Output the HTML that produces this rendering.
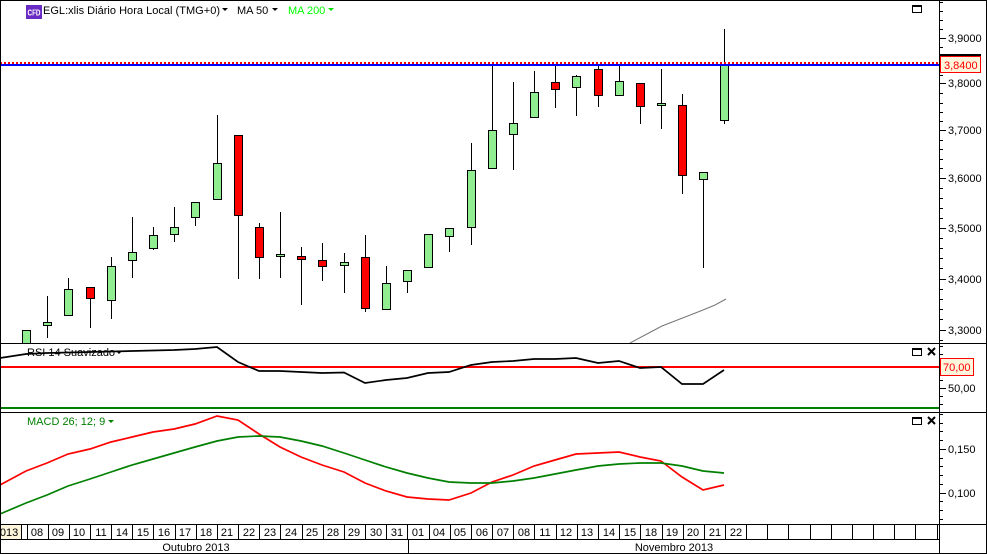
<!DOCTYPE html>
<html><head><meta charset="utf-8"><style>
html,body{margin:0;padding:0;background:#fff}
svg{display:block;font-family:"Liberation Sans",Arial,sans-serif}
.w path{stroke:#000;stroke-width:1;fill:none}
.g{fill:#90ee90;stroke:#000;stroke-width:1}
.r{fill:#ff0000;stroke:#000;stroke-width:1}
.ax{fill:#000;font-size:11px}
.d{fill:#000;font-size:11px;text-anchor:middle}
</style></head><body>
<svg width="987" height="554" viewBox="0 0 987 554" xmlns="http://www.w3.org/2000/svg">
<rect width="987" height="554" fill="#fff"/>
<!-- MA200 -->
<polyline points="630,343 645,335 662,326 680,319 703,310 715,305 726,299" fill="none" stroke="#777" stroke-width="1"/>
<!-- wicks -->
<g class="w" shape-rendering="crispEdges">
<path d="M47.5 296V338M68.5 278V290M90.5 298V328M111.5 257V319M132.5 217V278M153.5 227V250M174.5 207V242M195.5 217V226M217.5 115V164M238.5 215V279M259.5 223V279M280.5 212V278M301.5 247V305M322.5 243V281M344.5 253V293M365.5 235V312M386.5 266V284M407.5 281V293M449.5 236V252M471.5 143V245M492.5 64V131M513.5 82V170M534.5 71V93M555.5 64V108M576.5 75V116M598.5 64V107M619.5 64V82M640.5 106V124M661.5 69V129M682.5 94V194M703.5 179V268M724.5 29V124"/>
</g>
<!-- bodies -->
<g shape-rendering="crispEdges">
<rect class="g" x="22.5" y="330.5" width="8" height="13"/>
<rect class="g" x="43.5" y="322.5" width="8" height="3"/>
<rect class="g" x="64.5" y="289.5" width="8" height="26"/>
<rect class="r" x="86.5" y="287.5" width="8" height="11"/>
<rect class="g" x="107.5" y="266.5" width="8" height="34"/>
<rect class="g" x="128.5" y="252.5" width="8" height="8"/>
<rect class="g" x="149.5" y="235.5" width="8" height="13"/>
<rect class="g" x="170.5" y="227.5" width="8" height="7"/>
<rect class="g" x="191.5" y="202.5" width="8" height="15"/>
<rect class="g" x="213.5" y="163.5" width="8" height="36"/>
<rect class="r" x="234.5" y="135.5" width="8" height="80"/>
<rect class="r" x="255.5" y="227.5" width="8" height="30"/>
<rect class="g" x="276.5" y="254.5" width="8" height="2"/>
<rect class="r" x="297.5" y="256.5" width="8" height="3"/>
<rect class="r" x="318.5" y="260.5" width="8" height="6"/>
<rect class="g" x="340.5" y="262.5" width="8" height="3"/>
<rect class="r" x="361.5" y="257.5" width="8" height="51"/>
<rect class="g" x="382.5" y="283.5" width="8" height="26"/>
<rect class="g" x="403.5" y="270.5" width="8" height="11"/>
<rect class="g" x="424.5" y="234.5" width="8" height="33"/>
<rect class="g" x="445.5" y="228.5" width="8" height="8"/>
<rect class="g" x="467.5" y="170.5" width="8" height="57"/>
<rect class="g" x="488.5" y="130.5" width="8" height="38"/>
<rect class="g" x="509.5" y="123.5" width="8" height="11"/>
<rect class="g" x="530.5" y="92.5" width="8" height="25"/>
<rect class="r" x="551.5" y="82.5" width="8" height="7"/>
<rect class="g" x="572.5" y="76.5" width="8" height="11"/>
<rect class="r" x="594.5" y="69.5" width="8" height="26"/>
<rect class="g" x="615.5" y="81.5" width="8" height="14"/>
<rect class="r" x="636.5" y="83.5" width="8" height="23"/>
<rect class="g" x="657.5" y="103.5" width="8" height="2"/>
<rect class="r" x="678.5" y="105.5" width="8" height="70"/>
<rect class="g" x="699.5" y="172.5" width="8" height="7"/>
<rect class="g" x="720.5" y="64.5" width="8" height="56"/>
</g>
<!-- level lines -->
<g shape-rendering="crispEdges">
<line x1="0" y1="63" x2="939" y2="63" stroke="#ff0000" stroke-width="2" stroke-dasharray="2 2"/>
<rect x="0" y="64" width="939" height="2" fill="#0000ff"/>
<rect x="0" y="366" width="939" height="2" fill="#ff0000"/>
<rect x="0" y="407" width="939" height="2" fill="#008000"/>
</g>
<!-- RSI -->
<polyline points="0,358 26,354 47,353 90,352 132,351 174,350 195,349 217,347 238,362 259,371 280,371 301,372 322,373 344,372.5 365,383 386,380 407,378 428,373 449,372 471,365 492,362 513,361 534,359 555,359 576,358 598,363 619,361 640,368 661,367 682,384 703,384 724,370" fill="none" stroke="#000" stroke-width="1.7"/>
<!-- MACD -->
<polyline points="0,485 26,471 47,463 68,454 90,449 111,442 132,437 153,432 174,429 195,424 217,416 238,420 259,434 280,447 301,457 322,465 344,472 365,483 386,491 407,497 428,499 449,500 471,493 492,482 513,475 534,466 555,460 576,454 598,453 619,452 640,457 661,461 682,477 703,490 724,485" fill="none" stroke="#ff0000" stroke-width="1.7"/>
<polyline points="0,514 26,503 47,495 68,486 90,479 111,472 132,465 153,459 174,453 195,447 217,441 238,437 259,436 280,437 301,441 322,446 344,453 365,460 386,467 407,473 428,478 449,482 471,483 492,483 513,481 534,478 555,474 576,470 598,466 619,464 640,463 661,463 682,466 703,471 724,473" fill="none" stroke="#008000" stroke-width="1.7"/>
<!-- header -->
<rect x="26" y="5" width="16" height="14" fill="#6a2bc4"/>
<text x="34" y="15.5" font-size="8" font-weight="bold" fill="#fff" text-anchor="middle" textLength="13" lengthAdjust="spacingAndGlyphs">CFD</text>
<text x="43" y="14" font-size="11" fill="#000" textLength="177">EGL:xlis Diário Hora Local (TMG+0)</text>
<path d="M222 8h6l-3 3z" fill="#000"/>
<text x="237" y="14" font-size="11" fill="#000">MA 50</text>
<path d="M272 8h6l-3 3z" fill="#000"/>
<text x="288" y="14" font-size="11" fill="#00ff00">MA 200</text>
<path d="M328 8h6l-3 3z" fill="#00e000"/>
<text x="27" y="356" font-size="11" fill="#000">RSI 14 Suavizado</text>
<path d="M116 351h6l-3 3z" fill="#000"/>
<text x="27" y="425" font-size="11" fill="#008000">MACD 26; 12; 9</text>
<path d="M108 420h6l-3 3z" fill="#008000"/>
<!-- window icons -->
<g fill="none" stroke="#000" shape-rendering="crispEdges">
<rect x="912.5" y="5.5" width="9" height="7"/><path d="M912 6.5h10"/>
<rect x="912.5" y="348.5" width="9" height="7"/><path d="M912 349.5h10"/>
<rect x="912.5" y="417.5" width="9" height="7"/><path d="M912 418.5h10"/>
</g>
<path d="M928 348l7 7M935 348l-7 7M928 417l7 7M935 417l-7 7" stroke="#000" stroke-width="2" fill="none"/>
<!-- frame lines -->
<g fill="#000" shape-rendering="crispEdges">
<rect x="0" y="0" width="987" height="1"/>
<rect x="0" y="0" width="1" height="554"/>
<rect x="986" y="0" width="1" height="554"/>
<rect x="939" y="0" width="1" height="553"/>
<rect x="0" y="343" width="987" height="1"/>
<rect x="0" y="412" width="987" height="1"/>
<rect x="0" y="524" width="987" height="1"/>
<rect x="0" y="539" width="939" height="1"/>
<rect x="0" y="553" width="987" height="1"/>
</g>
<!-- ticks -->
<g stroke="#000" shape-rendering="crispEdges">
<path d="M940 2.5h3M940 11.5h3M940 20.5h3M940 29.5h3M940 38.5h6M940 47.5h3M940 56.5h3M940 75.5h3M940 83.5h6M940 93.5h3M940 103.5h3M940 112.5h3M940 121.5h3M940 130.5h6M940 140.5h3M940 149.5h3M940 159.5h3M940 168.5h3M940 178.5h6M940 188.5h3M940 198.5h3M940 208.5h3M940 218.5h3M940 228.5h6M940 238.5h3M940 248.5h3M940 258.5h3M940 268.5h3M940 279.5h6M940 289.5h3M940 299.5h3M940 309.5h3M940 319.5h3M940 330.5h6M940 340.5h3"/>
<path d="M940 346.5h3M940 354.5h3M940 380.5h3M940 388.5h6M940 396.5h3M940 404.5h3"/>
<path d="M940 414.5h3M940 423.5h3M940 431.5h3M940 440.5h3M940 449.5h6M940 458.5h3M940 466.5h3M940 475.5h3M940 484.5h3M940 493.5h6M940 501.5h3M940 510.5h3M940 519.5h3"/>
</g>
<!-- axis labels -->
<text class="ax" x="948" y="42">3,9000</text>
<text class="ax" x="948" y="87">3,8000</text>
<text class="ax" x="948" y="134">3,7000</text>
<text class="ax" x="948" y="182">3,6000</text>
<text class="ax" x="948" y="232">3,5000</text>
<text class="ax" x="948" y="283">3,4000</text>
<text class="ax" x="948" y="334">3,3000</text>
<text class="ax" x="948" y="392">50,00</text>
<text class="ax" x="948" y="453">0,150</text>
<text class="ax" x="948" y="497">0,100</text>
<g shape-rendering="crispEdges">
<rect x="940" y="54" width="41" height="2" fill="#000"/>
<rect x="940.5" y="56.5" width="40" height="16" fill="#fdf5dc" stroke="#ff0000"/>
<rect x="940.5" y="358.5" width="33" height="17" fill="#fdf5dc" stroke="#ff0000"/>
</g>
<text x="944" y="69" font-size="11" fill="#ff0000">3,8400</text>
<text x="943" y="371" font-size="11" fill="#ff0000">70,00</text>
<!-- date axis -->
<rect x="1" y="525" width="21" height="14" fill="#fdf5dc"/>
<g stroke="#000" shape-rendering="crispEdges">
<path d="M21.5 525V539M27.5 525V539M48.5 525V539M69.5 525V539M90.5 525V539M111.5 525V539M132.5 525V539M153.5 525V539M175.5 525V539M196.5 525V539M217.5 525V539M238.5 525V539M259.5 525V539M280.5 525V539M302.5 525V539M323.5 525V539M344.5 525V539M365.5 525V539M386.5 525V539M407.5 525V539M429.5 525V539M450.5 525V539M471.5 525V539M492.5 525V539M513.5 525V539M534.5 525V539M556.5 525V539M577.5 525V539M598.5 525V539M619.5 525V539M640.5 525V539M662.5 525V539M683.5 525V539M704.5 525V539M725.5 525V539M746.5 525V539M767.5 525V539M788.5 525V539M810.5 525V539M831.5 525V539M852.5 525V539M873.5 525V539M894.5 525V539M915.5 525V539M937.5 525V539M408.5 540V553"/>
</g>
<g class="d">
<text x="9" y="536" text-anchor="middle">013</text>
<text x="37" y="536">08</text><text x="58" y="536">09</text><text x="79" y="536">10</text><text x="101" y="536">11</text><text x="122" y="536">14</text><text x="143" y="536">15</text><text x="164" y="536">16</text><text x="185" y="536">17</text><text x="206" y="536">18</text><text x="227" y="536">21</text><text x="249" y="536">22</text><text x="270" y="536">23</text><text x="291" y="536">24</text><text x="312" y="536">25</text><text x="333" y="536">28</text><text x="354" y="536">29</text><text x="376" y="536">30</text><text x="397" y="536">31</text><text x="418" y="536">01</text><text x="439" y="536">04</text><text x="460" y="536">05</text><text x="482" y="536">06</text><text x="503" y="536">07</text><text x="524" y="536">08</text><text x="545" y="536">11</text><text x="566" y="536">12</text><text x="587" y="536">13</text><text x="609" y="536">14</text><text x="630" y="536">15</text><text x="651" y="536">18</text><text x="672" y="536">19</text><text x="693" y="536">20</text><text x="715" y="536">21</text><text x="736" y="536">22</text>
<text x="196" y="551">Outubro 2013</text>
<text x="674" y="551">Novembro 2013</text>
</g>
</svg>
</body></html>
